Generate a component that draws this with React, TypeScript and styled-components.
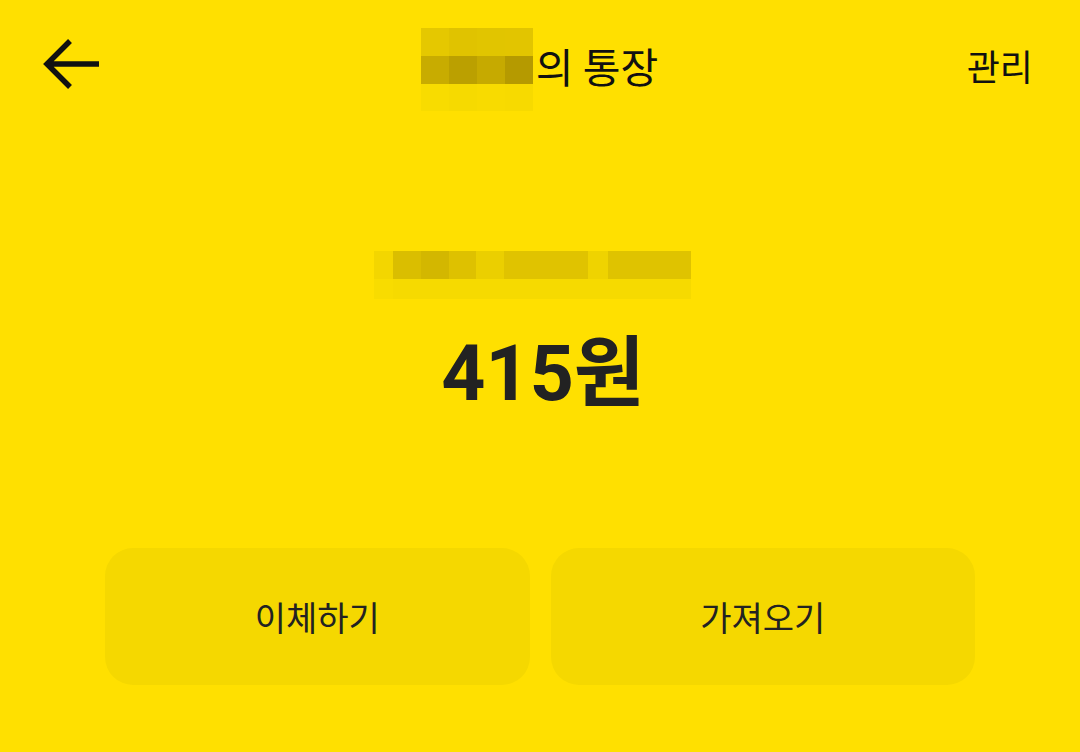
import React from 'react';
import styled, { createGlobalStyle } from 'styled-components';

const GlobalStyle = createGlobalStyle`
  body {
    margin: 0;
    background: #ffe000;
    font-family: Roboto, "Noto Sans CJK KR", sans-serif;
  }
`;

// pixelated blocks that stand in for the hidden name / account number
const titleMosaic = {
  cols: [28, 28, 28, 28],
  rows: [28, 28, 27],
  colors: [
    '#e5c800', '#e0c300', '#e1c500', '#e2c500',
    '#c8ac00', '#bba000', '#c6aa00', '#b59a00',
    '#f8dc00', '#f6da00', '#f8db00', '#f7da00',
  ],
};

const accountMosaic = {
  cols: [19, 28, 28, 27, 28, 84, 20, 83],
  rows: [28, 20],
  colors: [
    '#f3d600', '#dabe00', '#d3b700', '#dec100', '#ebcf00', '#e0c300', '#efd300', '#dfc300',
    '#f8dc00', '#f6da00', '#f6da00', '#f6da00', '#f6da00', '#f6da00', '#f6da00', '#f6da00',
  ],
};

type MosaicData = { cols: number[]; rows: number[]; colors: string[] };

const Mosaic = ({ data, className }: { data: MosaicData; className?: string }) => (
  <MosaicGrid
    className={className}
    $cols={data.cols.map((c) => c + 'px').join(' ')}
    $rows={data.rows.map((r) => r + 'px').join(' ')}
  >
    {data.colors.map((c, i) => (
      <Cell key={i} $color={c} />
    ))}
  </MosaicGrid>
);

const BackArrow = () => (
  <svg width="58" height="52" viewBox="0 0 58 52" fill="none">
    <path d="M4 26 H56 M27 3 L4 26 L27 49" stroke="#111" strokeWidth="5.5" strokeLinecap="butt" strokeLinejoin="miter" />
  </svg>
);

const App = () => {
  return (
    <Page>
      <GlobalStyle />
      <Header>
        <BackButton>
          <BackArrow />
        </BackButton>
        <Title>
          <TitleMosaic data={titleMosaic} />
          <span>의 통장</span>
        </Title>
        <Manage>관리</Manage>
      </Header>

      <Body>
        <AccountMosaic data={accountMosaic} />
        <Amount>415원</Amount>
        <Actions>
          <ActionButton>이체하기</ActionButton>
          <ActionButton>가져오기</ActionButton>
        </Actions>
      </Body>
    </Page>
  );
};

const Page = styled.div`
  width: 1080px;
  height: 752px;
  background: #ffe000;
  overflow: hidden;
`;

const Header = styled.header`
  height: 130px;
  display: grid;
  grid-template-columns: 1fr auto 1fr;
  align-items: center;
  padding: 0 47px 0 43px;
`;

const BackButton = styled.div`
  display: flex;
  align-items: center;
  margin-top: -2px;
`;

const Title = styled.div`
  display: flex;
  align-items: center;
  gap: 3px;
  margin-left: 3px;
  font-family: "Noto Sans CJK KR", sans-serif;
  font-size: 41px;
  color: #111;
`;

const MosaicGrid = styled.div<{ $cols: string; $rows: string }>`
  display: grid;
  grid-template-columns: ${(p) => p.$cols};
  grid-template-rows: ${(p) => p.$rows};
`;

const Cell = styled.div<{ $color: string }>`
  background: ${(p) => p.$color};
`;

const TitleMosaic = styled(Mosaic)`
  margin-top: 9px;
`;

const Manage = styled.div`
  justify-self: end;
  font-family: "Noto Sans CJK KR", sans-serif;
  font-size: 36px;
  color: #111;
`;

const Body = styled.main`
  display: flex;
  flex-direction: column;
  align-items: center;
`;

const AccountMosaic = styled(Mosaic)`
  margin-top: 121px;
  margin-left: -15px;
`;

const Amount = styled.div`
  margin-top: 36px;
  margin-left: 6px;
  height: 78px;
  line-height: 78px;
  font-size: 77px;
  font-weight: 700;
  color: #222;
`;

const Actions = styled.div`
  margin-top: 135px;
  width: 100%;
  box-sizing: border-box;
  padding: 0 105px;
  display: grid;
  grid-template-columns: 1fr 1fr;
  gap: 21px;
`;

const ActionButton = styled.button`
  height: 137px;
  border: none;
  border-radius: 28px;
  background: #f5d800;
  font-family: "Noto Sans CJK KR", sans-serif;
  font-size: 34px;
  color: #222;
  padding: 0;
`;

export default App;
